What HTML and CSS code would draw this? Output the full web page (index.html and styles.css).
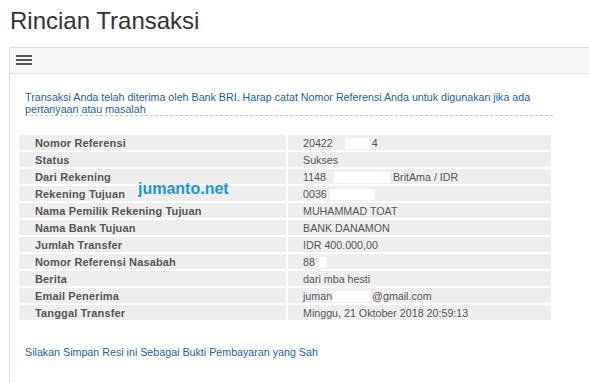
FILE: index.html
```html
<!DOCTYPE html>
<html lang="id">
<head>
    <meta charset="UTF-8">
    <meta name="viewport" content="width=device-width, initial-scale=1.0">
    <title>Rincian Transaksi</title>
    <link rel="stylesheet" href="styles.css">
</head>
<body>
    <h1>Rincian Transaksi</h1>
    <div class="panel">
        <div class="panel-head">
            <svg class="menu-icon" width="16" height="10" viewBox="0 0 16 10">
                <rect x="0" y="0" width="16" height="2" fill="#555"/>
                <rect x="0" y="4" width="16" height="2" fill="#555"/>
                <rect x="0" y="8" width="16" height="2" fill="#555"/>
            </svg>
        </div>
        <div class="panel-body">
            <p class="note note-top">Transaksi Anda telah diterima oleh Bank BRI. Harap catat Nomor Referensi Anda untuk digunakan jika ada pertanyaan atau masalah</p>

            <div class="detail-wrap">
                <table class="detail">
                    <tr><td class="label">Nomor Referensi</td><td class="value">20422<span class="mask m-ref"></span>4</td></tr>
                    <tr><td class="label">Status</td><td class="value">Sukses</td></tr>
                    <tr><td class="label">Dari Rekening</td><td class="value">1148<span class="mask m-from"></span> BritAma / IDR</td></tr>
                    <tr><td class="label">Rekening Tujuan</td><td class="value">0036<span class="mask m-to"></span></td></tr>
                    <tr><td class="label">Nama Pemilik Rekening Tujuan</td><td class="value">MUHAMMAD TOAT</td></tr>
                    <tr><td class="label">Nama Bank Tujuan</td><td class="value">BANK DANAMON</td></tr>
                    <tr><td class="label">Jumlah Transfer</td><td class="value">IDR 400.000,00</td></tr>
                    <tr><td class="label">Nomor Referensi Nasabah</td><td class="value">88<span class="mask m-cust"></span></td></tr>
                    <tr><td class="label">Berita</td><td class="value">dari mba hesti</td></tr>
                    <tr><td class="label">Email Penerima</td><td class="value">juman<span class="mask m-mail"></span>@gmail.com</td></tr>
                    <tr><td class="label">Tanggal Transfer</td><td class="value">Minggu, 21 Oktober 2018 20:59:13</td></tr>
                </table>
                <span class="watermark">jumanto.net</span>
            </div>

            <p class="note note-bottom">Silakan Simpan Resi ini Sebagai Bukti Pembayaran yang Sah</p>
        </div>
    </div>
</body>
</html>
```

FILE: styles.css
```css
body {
    font-family: "Liberation Sans", Arial, sans-serif;
    background-color: #fff;
    color: #555;
    margin: 0;
    padding: 0;
    overflow: hidden;
}
h1 {
    margin: 0;
    padding: 8px 10px 0;
    font-size: 24px;
    line-height: 26px;
    font-weight: normal;
    color: #333;
}
.panel {
    margin: 13px 0 0 9px;
    border-left: 1px solid #ddd;
}
.panel-head {
    background-color: #f8f8f8;
    border-top: 1px solid #ddd;
    border-bottom: 1px solid #ddd;
    padding: 7px 0 8px 6px;
}
.menu-icon {
    display: block;
}
.panel-body {
    padding: 0 36px 25px 7px;
}
.note {
    font-size: 10.7px;
    line-height: 12px;
    color: #1a5ea8;
    margin: 0 0 0 8px;
}
.note-top {
    margin-top: 17px;
    padding-right: 1px;
    border-bottom: 1px dashed #c4c4c4;
}
.note-bottom {
    margin-top: 24px;
}
.detail-wrap {
    position: relative;
    margin-top: 17px;
}
.detail {
    width: 536px;
    table-layout: fixed;
    border-collapse: separate;
    border-spacing: 2px;
    font-size: 11px;
}
.detail td {
    background-color: #eee;
    height: 15px;
    line-height: 14px;
    padding: 1px 0 0;
    box-sizing: border-box;
    white-space: nowrap;
    color: #555;
}
.detail .label {
    width: 267px;
    padding-left: 16px;
    font-weight: bold;
    letter-spacing: 0.15px;
}
.detail .value {
    width: 263px;
    padding-left: 15px;
    font-size: 10.7px;
}
.mask {
    display: inline-block;
    height: 11px;
    background-color: #fff;
    vertical-align: -2px;
}
.m-ref { width: 25px; margin: 0 2px 0 12px; }
.m-from { width: 56px; margin-left: 8px; }
.m-to { width: 45px; margin-left: 3px; }
.m-cust { width: 9px; margin-left: 3px; }
.m-mail { width: 37px; margin: 0 2px 0 1px; }
.watermark {
    position: absolute;
    left: 121px;
    top: 46px;
    font-size: 16px;
    line-height: 20px;
    font-weight: bold;
    color: #1b98e0;
}
```
